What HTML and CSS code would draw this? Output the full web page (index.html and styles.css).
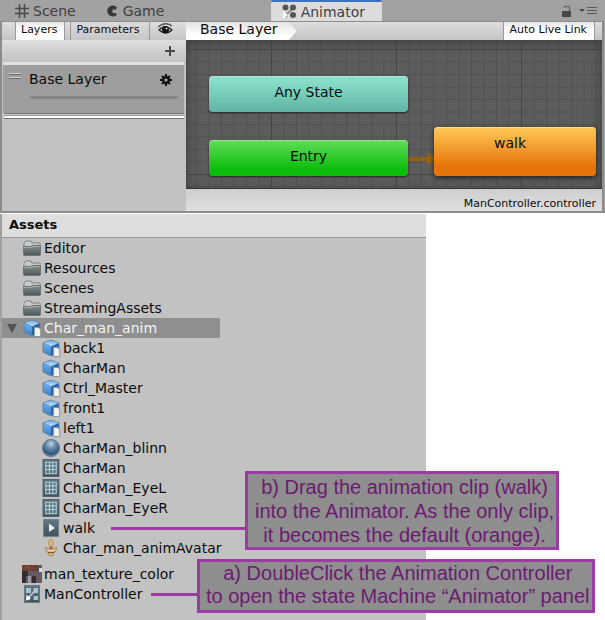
FILE: index.html
```html
<!DOCTYPE html>
<html lang="en">
<head>
<meta charset="utf-8">
<title>Animator</title>
<link rel="stylesheet" href="styles.css">
</head>
<body>
<svg class="defs" aria-hidden="true">
  <defs>
    <linearGradient id="gFolder" x1="0" y1="0" x2="0" y2="1"><stop offset="0" stop-color="#89908f"/><stop offset="1" stop-color="#4b5759"/></linearGradient>
    <linearGradient id="gTop" x1="0" y1="0" x2="0" y2="1"><stop offset="0" stop-color="#79b5ee"/><stop offset="1" stop-color="#b7e0fb"/></linearGradient>
    <linearGradient id="gLeft" x1="0" y1="0" x2="0" y2="1"><stop offset="0" stop-color="#6fb2ef"/><stop offset="1" stop-color="#397fc8"/></linearGradient>
    <radialGradient id="gBall" cx=".5" cy=".25" r=".75"><stop offset="0" stop-color="#bed4e4"/><stop offset=".4" stop-color="#6388a8"/><stop offset=".8" stop-color="#31597c"/><stop offset="1" stop-color="#6390b2"/></radialGradient>
    <linearGradient id="gTile" x1="0" y1="0" x2="0" y2="1"><stop offset="0" stop-color="#617884"/><stop offset="1" stop-color="#3f525d"/></linearGradient>
    <symbol id="folder" viewBox="0 0 20 18">
      <path d="M2 15V4l2-2h5l1 2h8v11H2z" fill="#c9cac6" stroke="#7c8484"/>
      <path d="M1.500 7.500h7l2-1h8v9q0 1-1 1h-15q-1 0-1-1z" fill="url(#gFolder)" stroke="#6d7676"/>
      <path d="M2 8.500h7l2-1h7" fill="none" stroke="#a4abab"/>
    </symbol>
    <symbol id="cube" viewBox="0 0 18 18">
      <path d="M1 4 9 1l8 3v9l-8 4-8-4z" fill="#3978b9" stroke="#77848f"/>
      <path d="M1.500 4 9 1.500 16.500 4 9 7.500z" fill="url(#gTop)"/>
      <path d="M1.500 4.500 9 8v8.500l-7.500-4z" fill="url(#gLeft)"/>
      <path d="M16.500 4.500 9 8v8.500l7.500-4z" fill="#2b66a4"/>
      <path d="M11.500 8.500h4l2.200 2v7h-6.200z" fill="#f0f1f2" stroke="#8e969e"/>
    </symbol>
    <symbol id="ball" viewBox="0 0 18 18"><circle cx="9" cy="9" r="8.500" fill="url(#gBall)" stroke="#5c7790"/></symbol>
    <symbol id="mesh" viewBox="0 0 16 17">
      <rect x=".5" y=".5" width="15" height="16" fill="url(#gTile)" stroke="#50636e"/>
      <path d="M3 3h10v11H3zM6.500 3v11M9.800 3v11M3 6.500h10M3 10h10" fill="#5c7480" stroke="#b3d0da"/>
    </symbol>
    <symbol id="clip" viewBox="0 0 16 18">
      <rect x=".5" y=".5" width="15" height="17" fill="url(#gTile)" stroke="#74818a"/>
      <path d="M6 4.500 12 9l-6 4z" fill="#e8eced"/>
    </symbol>
    <symbol id="avatar" viewBox="0 0 14 18">
      <path d="M5.500 7h3v3h-3z" fill="#8d6a3c"/>
      <ellipse cx="7" cy="4" rx="2.500" ry="3.700" fill="#dcb57a" stroke="#a57d48" stroke-width=".6"/>
      <path d="M1.500 8.500Q3 8 4.500 10h5Q11 8 12.500 8.500L12 12l-2 1.500-.5 2.500L7 17.500 4.500 16 4 13.500 2 12z" fill="#dcb57a" stroke="#9a7442" stroke-width=".7"/>
      <path d="M4 13.500h6" stroke="#705433"/>
      <path d="M4 11.500h6" stroke="#f2dab0"/>
    </symbol>
    <symbol id="texture" viewBox="0 0 20 18">
      <path fill="#665b63" d="M0 0h20v18H0z"/>
      <path fill="#6f3f32" d="M0 0h16v6H0z"/>
      <path fill="#814a38" d="M3 1h5v3H3zM11 3h4v2h-4z"/>
      <path fill="#332c30" d="M0 6h6v5H0zM0 11h4v7H0zM10 11h4v7h-4z"/>
      <path fill="#9b9dae" d="M6 11h3v7H6z"/>
      <path fill="#ded6d0" d="M17 3h3v4h-3z"/>
      <path fill="#574144" d="M13 1h4v5h-4z"/>
    </symbol>
    <symbol id="controller" viewBox="0 0 16 18">
      <rect x=".5" y=".5" width="15" height="17" fill="url(#gTile)" stroke="#677982"/>
      <path d="M2 3h5v5H2zM9.500 3h4.500v5H9.500zM9.500 11h4.500v4H9.500zM2 11h4v4H2z" fill="#a9c2cc"/>
      <path d="m5 12 6-6" stroke="#c9dce3" stroke-width="1.500" fill="none"/>
      <path d="m2.500 10 4.500 3-4.500 3z" fill="#fff"/>
    </symbol>
  </defs>
</svg>

<section class="animator">
  <nav class="tabs">
    <button class="tab tab-scene"><svg width="14" height="14" viewBox="0 0 14 14"><path d="M4.500 0v14M9.500 0v14M0 4.500h14M0 9.500h14" stroke="#4a4a4a" stroke-width="1.500"/></svg>Scene</button>
    <button class="tab tab-game"><svg width="12" height="12" viewBox="0 0 12 12"><path d="M11 2.500A5.500 5.500 0 1 0 11 9.500L9.500 8H6.500V4.500H10z" fill="#383838"/></svg>Game</button>
    <button class="tab tab-current"><svg width="15" height="15" viewBox="0 0 15 15"><path d="m4 11 7-7" stroke="#888" stroke-width="2"/><g fill="#555"><circle cx="3.500" cy="3.500" r="3"/><circle cx="11" cy="3.500" r="3"/><circle cx="11" cy="11" r="3"/><circle cx="3.500" cy="11" r="2.500" fill="#999"/></g><path d="m1 7 5 4-5 4z" fill="#fff"/></svg>Animator</button>
    <div class="window-tools">
      <button aria-label="Lock"><svg width="11" height="12" viewBox="0 0 11 12"><path d="M1 6h9v6H1z" fill="#484848"/><path d="M3.500 3V1.500h5V6" fill="none" stroke="#6d6d6d" stroke-width="1.500"/></svg></button>
      <button aria-label="Panel menu"><svg width="18" height="9" viewBox="0 0 18 9"><path d="M0 3h6L3 6z" fill="#484848"/><path d="M8 1.500h10M8 4.500h10M8 7.500h10" stroke="#555"/></svg></button>
    </div>
  </nav>

  <div class="workspace">
    <aside class="layers">
      <div class="toolbar">
        <button class="tool on">Layers</button>
        <button class="tool params">Parameters</button>
        <button class="eye" aria-label="Visibility"><svg width="15" height="13" viewBox="0 0 15 13"><path d="M0 4Q7-2 14 3" fill="none" stroke="#555" stroke-width="1.500"/><path d="M1 7q6-7 13 0-6 6-13 0z" fill="#bbb" stroke="#222" stroke-width="1.200"/><circle cx="7.500" cy="6.800" r="3.500" fill="#111"/><circle cx="8.500" cy="5.500" r="1" fill="#ddd"/></svg></button>
      </div>
      <div class="add-row"><button aria-label="Add layer"><svg width="10" height="10" viewBox="0 0 10 10"><path d="M5 0v10M0 5h10" stroke="#484848" stroke-width="2"/></svg></button></div>
      <div class="layer">
        <svg class="grip" width="12" height="8" viewBox="0 0 12 8"><path d="M0 1.500h12M0 5.500h12" stroke="#d0d0d0"/><path d="M0 2.500h12M0 6.500h12" stroke="#707070"/></svg>
        <span class="layer-name">Base Layer</span>
        <button aria-label="Layer settings"><svg width="12" height="12" viewBox="0 0 12 12"><path d="M6 0v12M0 6h12M2 2l8 8M10 2l-8 8" stroke="#111" stroke-width="2"/><circle cx="6" cy="6" r="2.800" fill="#aaa" stroke="#111" stroke-width="2.400"/></svg></button>
        <div class="weight"></div>
      </div>
      <div class="list-end"></div>
    </aside>
    <main class="stage">
      <div class="toolbar stage-bar">
        <a class="crumb" href="#">Base Layer</a>
        <button class="tool on live">Auto Live Link</button>
      </div>
      <div class="graph">
        <svg class="arrow" width="28" height="14" viewBox="0 0 28 14"><path d="M0 5.500 19 5v4L0 9z" fill="#96610a"/><path d="m19 0 9 7-9 7z" fill="#96610a"/></svg>
        <div class="node any">Any State</div>
        <div class="node entry">Entry</div>
        <div class="node walk">walk</div>
      </div>
      <footer class="status">ManController.controller</footer>
    </main>
  </div>
</section>

<section class="project">
  <div class="assets">
    <h2>Assets</h2>
    <ul>
      <li><svg class="icon"><use href="#folder"/></svg>Editor</li>
      <li><svg class="icon"><use href="#folder"/></svg>Resources</li>
      <li><svg class="icon"><use href="#folder"/></svg>Scenes</li>
      <li><svg class="icon"><use href="#folder"/></svg>StreamingAssets</li>
      <li class="selected"><span class="fold"></span><svg class="icon"><use href="#cube"/></svg>Char_man_anim</li>
      <li class="child"><svg class="icon"><use href="#cube"/></svg>back1</li>
      <li class="child"><svg class="icon"><use href="#cube"/></svg>CharMan</li>
      <li class="child"><svg class="icon"><use href="#cube"/></svg>Ctrl_Master</li>
      <li class="child"><svg class="icon"><use href="#cube"/></svg>front1</li>
      <li class="child"><svg class="icon"><use href="#cube"/></svg>left1</li>
      <li class="child"><svg class="icon"><use href="#ball"/></svg>CharMan_blinn</li>
      <li class="child"><svg class="icon"><use href="#mesh"/></svg>CharMan</li>
      <li class="child"><svg class="icon"><use href="#mesh"/></svg>CharMan_EyeL</li>
      <li class="child"><svg class="icon"><use href="#mesh"/></svg>CharMan_EyeR</li>
      <li class="child"><svg class="icon"><use href="#clip"/></svg>walk</li>
      <li class="child"><svg class="icon"><use href="#avatar"/></svg>Char_man_animAvatar</li>
    </ul>
    <ul class="loose">
      <li><svg class="icon"><use href="#texture"/></svg>man_texture_color</li>
      <li><svg class="icon"><use href="#controller"/></svg>ManController</li>
    </ul>
  </div>
  <p class="note note-b">b) Drag the animation clip (walk)<br>into the Animator. As the only clip,<br>it becomes the default (orange).</p>
  <p class="note note-a">a) DoubleClick the Animation Controller<br>to open the state Machine “Animator” panel</p>
</section>
</body>
</html>
```
FILE: styles.css
```css
* { box-sizing: border-box; }
body {
  margin: 0;
  min-height: 100vh;
  display: flex;
  flex-direction: column;
  background: #fff;
  color: #0c0c0c;
  font: 14px/20px "DejaVu Sans", sans-serif;
}
button {
  border: 0;
  padding: 0;
  background: none;
  color: inherit;
  font: inherit;
  display: flex;
  align-items: center;
}
svg { display: block; flex: none; }
.defs { position: absolute; width: 0; height: 0; }

.animator {
  background: #a2a2a2;
  border-bottom: 2px solid #8c8c8c;
  display: flex;
  flex-direction: column;
}
.tabs { display: flex; height: 21px; padding-left: 15px; }
.tab { gap: 4px; color: #404040; padding-top: 1px; }
.tab-game { margin-left: 30px; gap: 5px; }
.tab-current {
  margin-left: auto;
  background: #dcdcdc;
  border-top: 2px solid #3b73bc;
  border-radius: 2px 2px 0 0;
  padding: 0 17px 0 11px;
}
.window-tools { display: flex; gap: 7px; margin: 0 8px 0 179px; }

.workspace {
  display: flex;
  border: solid #8c8c8c;
  border-width: 1px 2px 0 2px;
  margin-right: 1px;
}
.layers { width: 184px; background: #c2c2c2; display: flex; flex-direction: column; }
.toolbar {
  height: 18px;
  display: flex;
  background: linear-gradient(#dedede, #c4c4c4);
}
.tool {
  font-size: 11px;
  line-height: 16px;
  padding: 0 7px 2px 5px;
  border: solid #999;
  border-width: 0 1px;
  background: linear-gradient(#dcdcdc, #c6c6c6);
}
.tool.on { background: linear-gradient(#e6e6e6, #fff 40%); }
.layers .on { margin-left: 13px; }
.params { margin-left: 5px; padding-right: 10px; }
.eye { margin-left: 8px; padding-bottom: 3px; }
.add-row {
  height: 22px;
  display: flex;
  justify-content: flex-end;
  padding-right: 11px;
  background: linear-gradient(#dedede, #c2c2c2);
}
.layer {
  height: 51px;
  border-top: 3px solid #e2e2e2;
  background: #9e9e9e;
  margin: 0 2px 0 1px;
  padding: 4px 12px 0 6px;
  display: grid;
  grid-template-columns: 20px 1fr auto;
  grid-template-rows: 20px 1fr;
}
.grip { margin-top: 3px; }
.weight { grid-column: 2 / 4; height: 3px; background: #858585; margin: 7px -6px 0 1px; }
.layer button { padding-top: 2px; }
.list-end {
  height: 6px;
  margin: 0 2px;
  background: linear-gradient(#777 1px, #ccc 1px 2px, #999 2px 3px, #fff 3px 5px, #777 5px);
}

.stage { flex: 1; min-width: 0; display: flex; flex-direction: column; }
.stage-bar { justify-content: space-between; }
.crumb {
  color: inherit;
  text-decoration: none;
  line-height: 15px;
  padding: 0 19px 3px 14px;
  background: linear-gradient(#e4e4e4, #fff 80%);
  clip-path: polygon(0 0, calc(100% - 8px) 0, 100% 50%, calc(100% - 8px) 100%, 0 100%);
}
.live { margin-right: 7px; }
.graph {
  position: relative;
  height: 148px;
  overflow: hidden;
  background-color: #5c5c5c;
  background-image:
    linear-gradient(90deg, #454545 1px, transparent 1px),
    linear-gradient(#454545 1px, transparent 1px),
    linear-gradient(90deg, #515151 1px, transparent 1px),
    linear-gradient(#515151 1px, transparent 1px);
  background-size: 125px 125px, 125px 125px, 12.5px 12.5px, 12.5px 12.5px;
  background-position: 85px 9px;
  box-shadow: inset 0 3px 12px #3c3c3c;
}
.node {
  position: absolute;
  left: 23px;
  width: 199px;
  height: 36px;
  border-radius: 4px;
  line-height: 32px;
  text-align: center;
  box-shadow: 0 1px 2px #222, inset 0 1px #ffffff55;
}
.any { top: 36px; background: linear-gradient(#8adfcb 10%, #60b4a6); }
.entry { top: 100px; background: linear-gradient(#62dc5a, #0cbe0c 80%); }
.walk {
  top: 87px;
  left: 248px;
  width: 162px;
  height: 49px;
  padding-right: 10px;
  background: linear-gradient(#ffca5a, #e67408 80%);
  box-shadow: 0 2px 5px #222, inset 0 1px #ffffff55;
}
.arrow { position: absolute; left: 222px; top: 112px; }
.status {
  height: 23px;
  border-top: 1px solid #333;
  background: linear-gradient(#cecece, #dfdfdf);
  font-size: 11px;
  line-height: 30px;
  text-align: right;
  padding-right: 6px;
}

.project {
  position: relative;
  flex: 1;
  display: grid;
  grid-template-columns: 426fr 179fr;
  padding-top: 1px;
}
.assets { background: #c2c2c2; border-left: 2px solid #a0a0a0; }
h2 {
  margin: 0;
  height: 24px;
  padding-left: 7px;
  background: #dedede;
  border-bottom: 1px solid #999;
  font-size: 13px;
  line-height: 22px;
}
ul { list-style: none; margin: 0; padding: 0; }
.loose { margin-top: 6px; }
li { position: relative; height: 20px; display: flex; align-items: center; gap: 2px; padding-left: 20px; }
.icon { width: 20px; height: 18px; }
.child { padding-left: 39px; }
.selected { background: #8f8f8f; color: #f4f4f4; width: 218px; }
.fold {
  position: absolute;
  left: 5px;
  top: 6px;
  border: solid transparent;
  border-width: 9px 5px 0;
  border-top-color: #555;
}
.note {
  position: absolute;
  margin: 0;
  border: 3px solid #9e3aa6;
  background: #8e8e8e;
  color: #6b1c70;
  font: 20px/24px "Liberation Sans", sans-serif;
  text-align: center;
  white-space: nowrap;
}
.note::before {
  content: "";
  position: absolute;
  right: 100%;
  height: 3px;
  background: #9e3aa6;
}
.note-b { left: 245px; top: 258px; padding: 1px 2px 0 7px; }
.note-b::before { width: 137px; top: 53px; }
.note-a { left: 197px; top: 346px; padding: 0 2px 2px 6px; line-height: 23px; }
.note-a::before { width: 49px; top: 31px; }
```
